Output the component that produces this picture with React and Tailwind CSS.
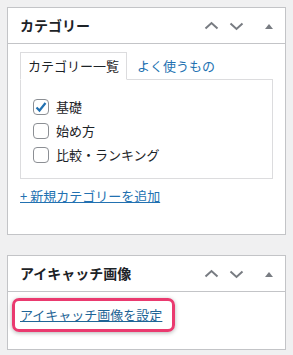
import { useState } from 'react';

const font = { fontFamily: '"Noto Sans CJK JP", "Noto Sans", sans-serif' };

const categories = [
  { id: 1, name: '基礎', checked: true },
  { id: 2, name: '始め方', checked: false },
  { id: 3, name: '比較・ランキング', checked: false },
];

const HeaderIcons = () => (
  <div className="flex items-center">
    <svg width="25" height="20" viewBox="0 0 25 20" className="text-[#787c82]">
      <path d="M6.5 12.5 L12.5 7 L18.5 12.5" fill="none" stroke="currentColor" strokeWidth="2" />
    </svg>
    <svg width="26" height="20" viewBox="0 0 26 20" className="text-[#787c82] mr-[7px]">
      <path d="M6.5 7.5 L12.5 13 L18.5 7.5" fill="none" stroke="currentColor" strokeWidth="2" />
    </svg>
    <svg width="24" height="20" viewBox="0 0 24 20" className="text-[#787c82]">
      <path d="M8 13 L12 8 L16 13 Z" fill="currentColor" />
    </svg>
  </div>
);

const PanelHeader = ({ title }) => (
  <div className="h-[36px] flex items-center justify-between pl-[12px] pr-[4px] border-b border-[#c3c4c7]">
    <h2 className="text-[14px] font-semibold text-[#1d2327]">{title}</h2>
    <HeaderIcons />
  </div>
);

const Checkbox = ({ checked, onChange }) => (
  <button
    onClick={onChange}
    className="w-[16px] h-[16px] border border-[#8c8f94] rounded-[4px] bg-white flex items-center justify-center"
  >
    {checked && (
      <svg width="14" height="14" viewBox="0 0 14 14">
        <path d="M2.5 7.5 L5.5 10.5 L11.5 3" fill="none" stroke="#2271b1" strokeWidth="2.2" />
      </svg>
    )}
  </button>
);

const App = () => {
  const [cats, setCats] = useState(categories);

  const toggle = (id) => {
    setCats(cats.map(c => (c.id === id ? { ...c, checked: !c.checked } : c)));
  };

  return (
    <div className="bg-[#f0f0f1] min-h-[355px] px-[7px] pt-[7px] pb-[7px]" style={font}>
      {/* カテゴリー */}
      <div className="bg-white border border-[#c3c4c7]">
        <PanelHeader title="カテゴリー" />
        <div className="px-[12px] pt-[8px] pb-[29px]">
          <div className="flex items-end">
            <div className="relative z-10 -mb-px h-[28px] px-[7px] flex items-center border border-[#dcdcde] border-b-white bg-white text-[13px] text-[#1d2327]">
              カテゴリー一覧
            </div>
            <div className="h-[27px] px-[10px] flex items-center text-[13px] text-[#2271b1]">
              よく使うもの
            </div>
          </div>
          <div className="border border-[#dcdcde] h-[100px] pt-[19px] pl-[12px]">
            {cats.map(c => (
              <div key={c.id} className="h-[24px] flex items-start gap-[7px]">
                <Checkbox checked={c.checked} onChange={() => toggle(c.id)} />
                <span className="text-[13px] leading-[16px] text-[#1d2327]">{c.name}</span>
              </div>
            ))}
          </div>
          <a href="#" className="block mt-[8px] text-[13px] leading-[18px] text-[#2271b1] underline">
            + 新規カテゴリーを追加
          </a>
        </div>
      </div>

      {/* アイキャッチ画像 */}
      <div className="mt-[20px] bg-white border border-[#c3c4c7]">
        <PanelHeader title="アイキャッチ画像" />
        <div className="px-[4px] pt-[6px] pb-[17px]">
          <div className="inline-block border-[3px] border-[#ea3a6f] rounded-[7px] px-[5px] py-[5px] shadow-[0_1px_4px_rgba(0,0,0,0.3)]">
            <a href="#" className="block text-[13px] leading-[18px] text-[#1f6596] underline pr-[5px]">
              アイキャッチ画像を設定
            </a>
          </div>
        </div>
      </div>
    </div>
  );
};

export default App;
